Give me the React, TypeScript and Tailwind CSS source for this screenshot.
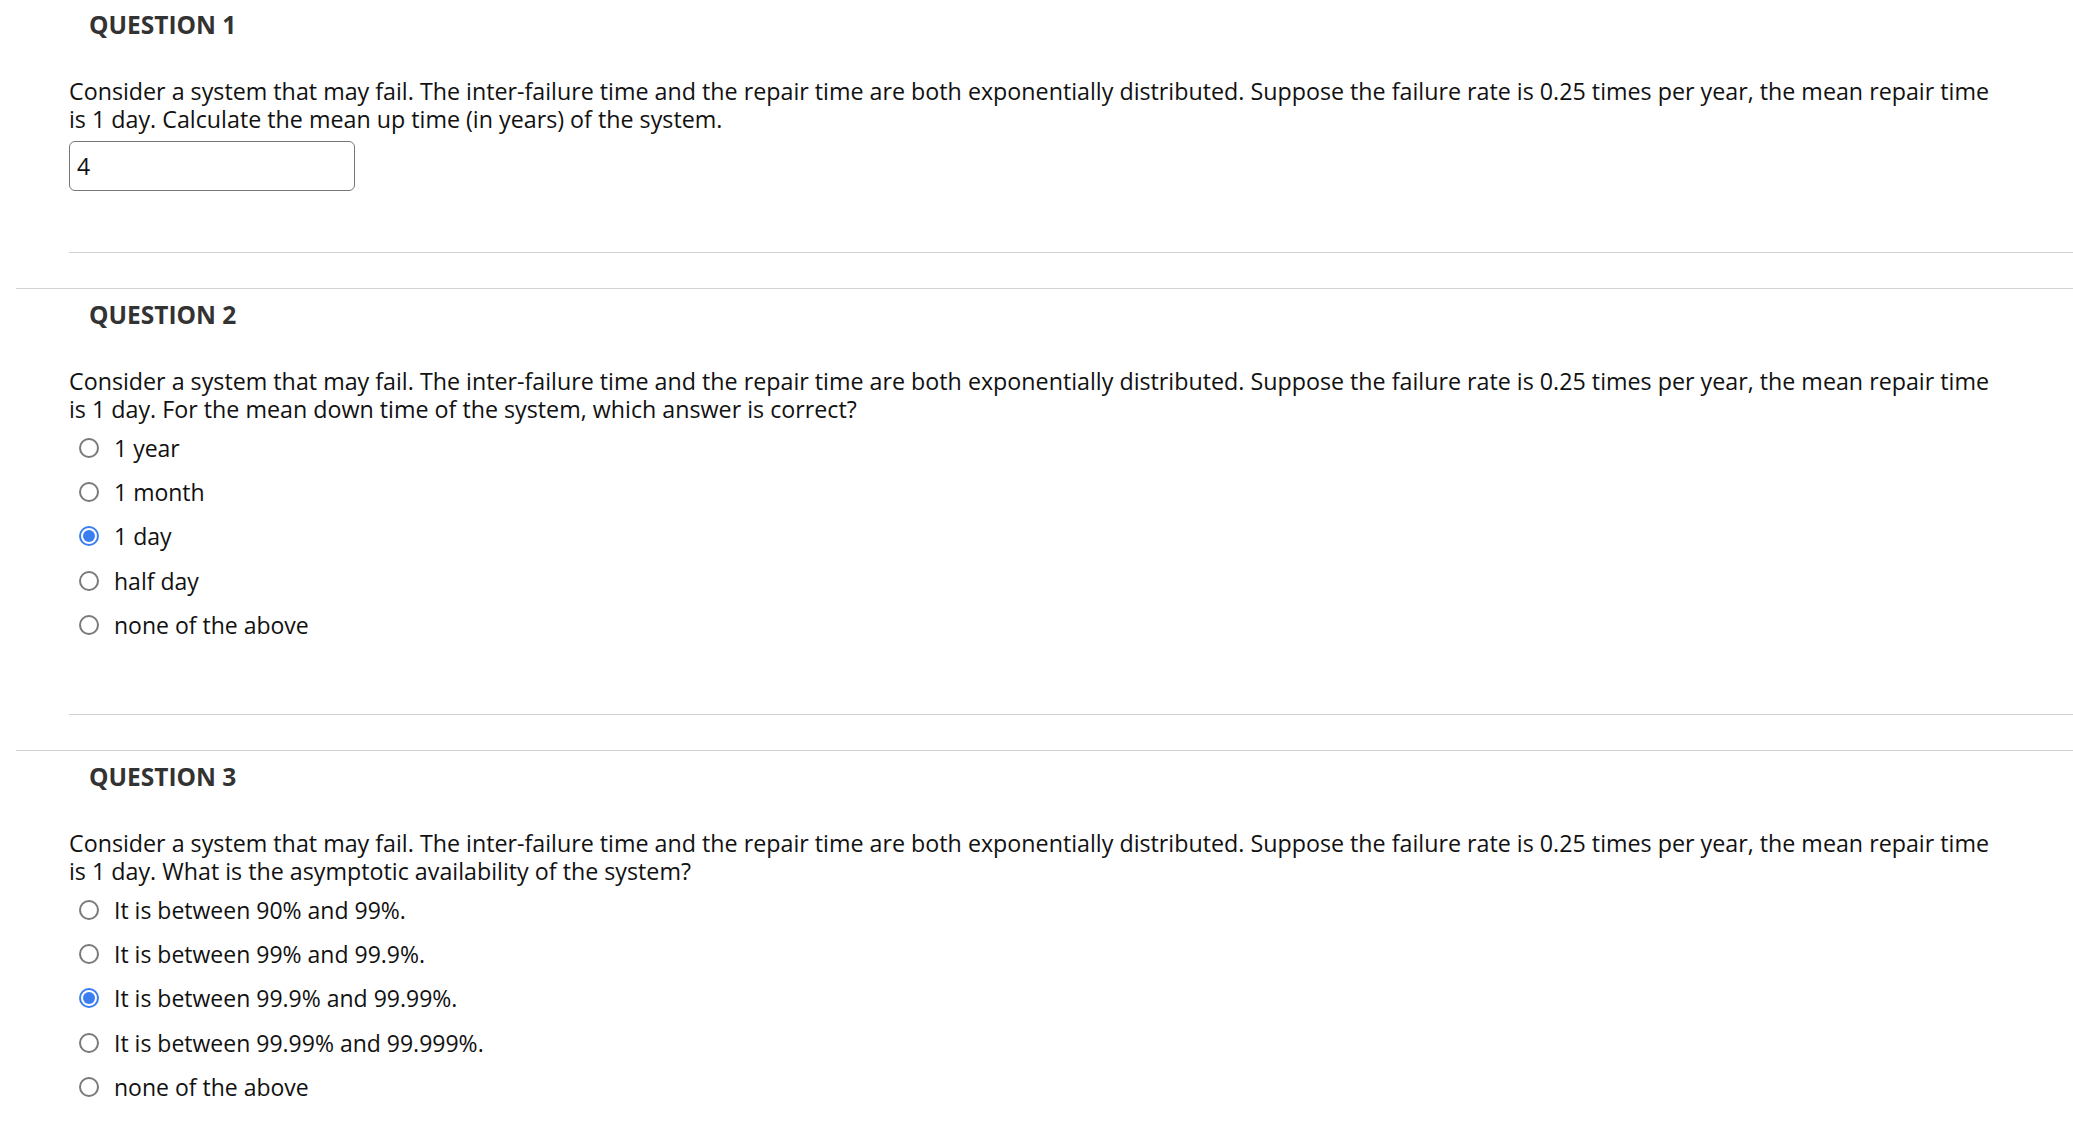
import clsx from 'clsx';

type Question = {
  title: string;
  text: string;
  options?: string[];
  selected?: number;
  answer?: string;
};

const stem =
  'Consider a system that may fail. The inter-failure time and the repair time are both exponentially distributed. Suppose the failure rate is 0.25 times per year, the mean repair time is 1 day.';

const questions: Question[] = [
  {
    title: 'QUESTION 1',
    text: `${stem} Calculate the mean up time (in years) of the system.`,
    answer: '4',
  },
  {
    title: 'QUESTION 2',
    text: `${stem} For the mean down time of the system, which answer is correct?`,
    options: ['1 year', '1 month', '1 day', 'half day', 'none of the above'],
    selected: 2,
  },
  {
    title: 'QUESTION 3',
    text: `${stem} What is the asymptotic availability of the system?`,
    options: [
      'It is between 90% and 99%.',
      'It is between 99% and 99.9%.',
      'It is between 99.9% and 99.99%.',
      'It is between 99.99% and 99.999%.',
      'none of the above',
    ],
    selected: 2,
  },
];

function Radio({ checked }: { checked: boolean }) {
  if (checked) {
    return (
      <span className="ml-[10px] flex h-[20px] w-[20px] shrink-0 items-center justify-center rounded-full border-2 border-[#3b7ef2] bg-white">
        <span className="h-[12px] w-[12px] rounded-full bg-[#3b7ef2]" />
      </span>
    );
  }
  return (
    <span className="ml-[10px] h-[20px] w-[20px] shrink-0 rounded-full border-2 border-[#7a7a7a] bg-white" />
  );
}

export default function App() {
  return (
    <div className="h-screen overflow-hidden bg-white font-['Open_Sans',sans-serif]">
      {questions.map((q, i) => (
        <section
          key={q.title}
          className={clsx(
            'ml-4 border-t border-[#d2d2d2] pb-[35px]',
            i === 0 && '-mt-[2px]'
          )}
        >
          <h3 className="pl-[73px] pt-[10px] text-[24.5px] leading-[32px] font-bold text-[#333]">
            {q.title}
          </h3>

          <div
            className={clsx(
              'ml-[53px] mt-[36px] border-b border-[#d2d2d2]',
              q.options ? 'pb-[67px]' : 'pb-[61px]'
            )}
          >
            <p className="max-w-[1932px] text-[23.25px] leading-[28px] text-[#111]">
              {q.text}
            </p>

            {q.answer !== undefined && (
              <input
                readOnly
                value={q.answer}
                className="mt-[8px] h-[50px] w-[286px] rounded-[6px] border border-[#767676] bg-white pl-[7px] text-[23px] text-[#111] outline-none"
              />
            )}

            {q.options && (
              <ul className="mt-[3px]">
                {q.options.map((opt, j) => (
                  <li key={opt} className="flex h-[44.2px] items-center">
                    <Radio checked={j === q.selected} />
                    <span className="ml-[15px] text-[23px] leading-[28px] text-[#111]">
                      {opt}
                    </span>
                  </li>
                ))}
              </ul>
            )}
          </div>
        </section>
      ))}
    </div>
  );
}
